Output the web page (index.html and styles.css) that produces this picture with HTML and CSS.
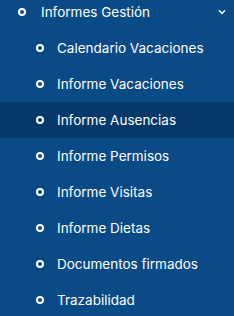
FILE: index.html
```html
<!DOCTYPE html>
<html>
<head>
<meta charset="utf-8">
<link rel="stylesheet" href="styles.css">
</head>
<body>
<nav class="menu">
  <div class="item parent">
    <span class="dot"></span>
    <span class="label">Informes Gestión</span>
    <svg class="chev" width="8" height="6" viewBox="0 0 8 6"><path d="M1 1.2 L4 4.4 L7 1.2" fill="none" stroke="#fff" stroke-width="1.4"/></svg>
  </div>
  <div class="item sub"><span class="dot"></span><span class="label">Calendario Vacaciones</span></div>
  <div class="item sub"><span class="dot"></span><span class="label">Informe Vacaciones</span></div>
  <div class="item sub active"><span class="dot"></span><span class="label">Informe Ausencias</span></div>
  <div class="item sub"><span class="dot"></span><span class="label">Informe Permisos</span></div>
  <div class="item sub"><span class="dot"></span><span class="label">Informe Visitas</span></div>
  <div class="item sub"><span class="dot"></span><span class="label">Informe Dietas</span></div>
  <div class="item sub"><span class="dot"></span><span class="label">Documentos firmados</span></div>
  <div class="item sub"><span class="dot"></span><span class="label">Trazabilidad</span></div>
</nav>
</body>
</html>
```
FILE: styles.css
```css
html, body {
  margin: 0;
  padding: 0;
  background: #0a4a86;
  overflow: hidden;
}
.menu {
  margin-top: -6px;
  font-family: Inter, "Noto Sans", sans-serif;
  font-size: 13.5px;
  color: #fff;
}
.item {
  height: 36px;
  display: flex;
  align-items: center;
}
.parent {
  padding-left: 18px;
}
.parent .dot {
  margin-right: 15px;
}
.sub {
  padding-left: 36px;
}
.active {
  background: #06386a;
}
.dot {
  box-sizing: border-box;
  width: 8px;
  height: 8px;
  border: 2.5px solid #fff;
  border-radius: 50%;
  flex: none;
  margin-right: 13px;
}
.label {
  flex: 1;
  white-space: nowrap;
}
.chev {
  margin-right: 8px;
}
```
